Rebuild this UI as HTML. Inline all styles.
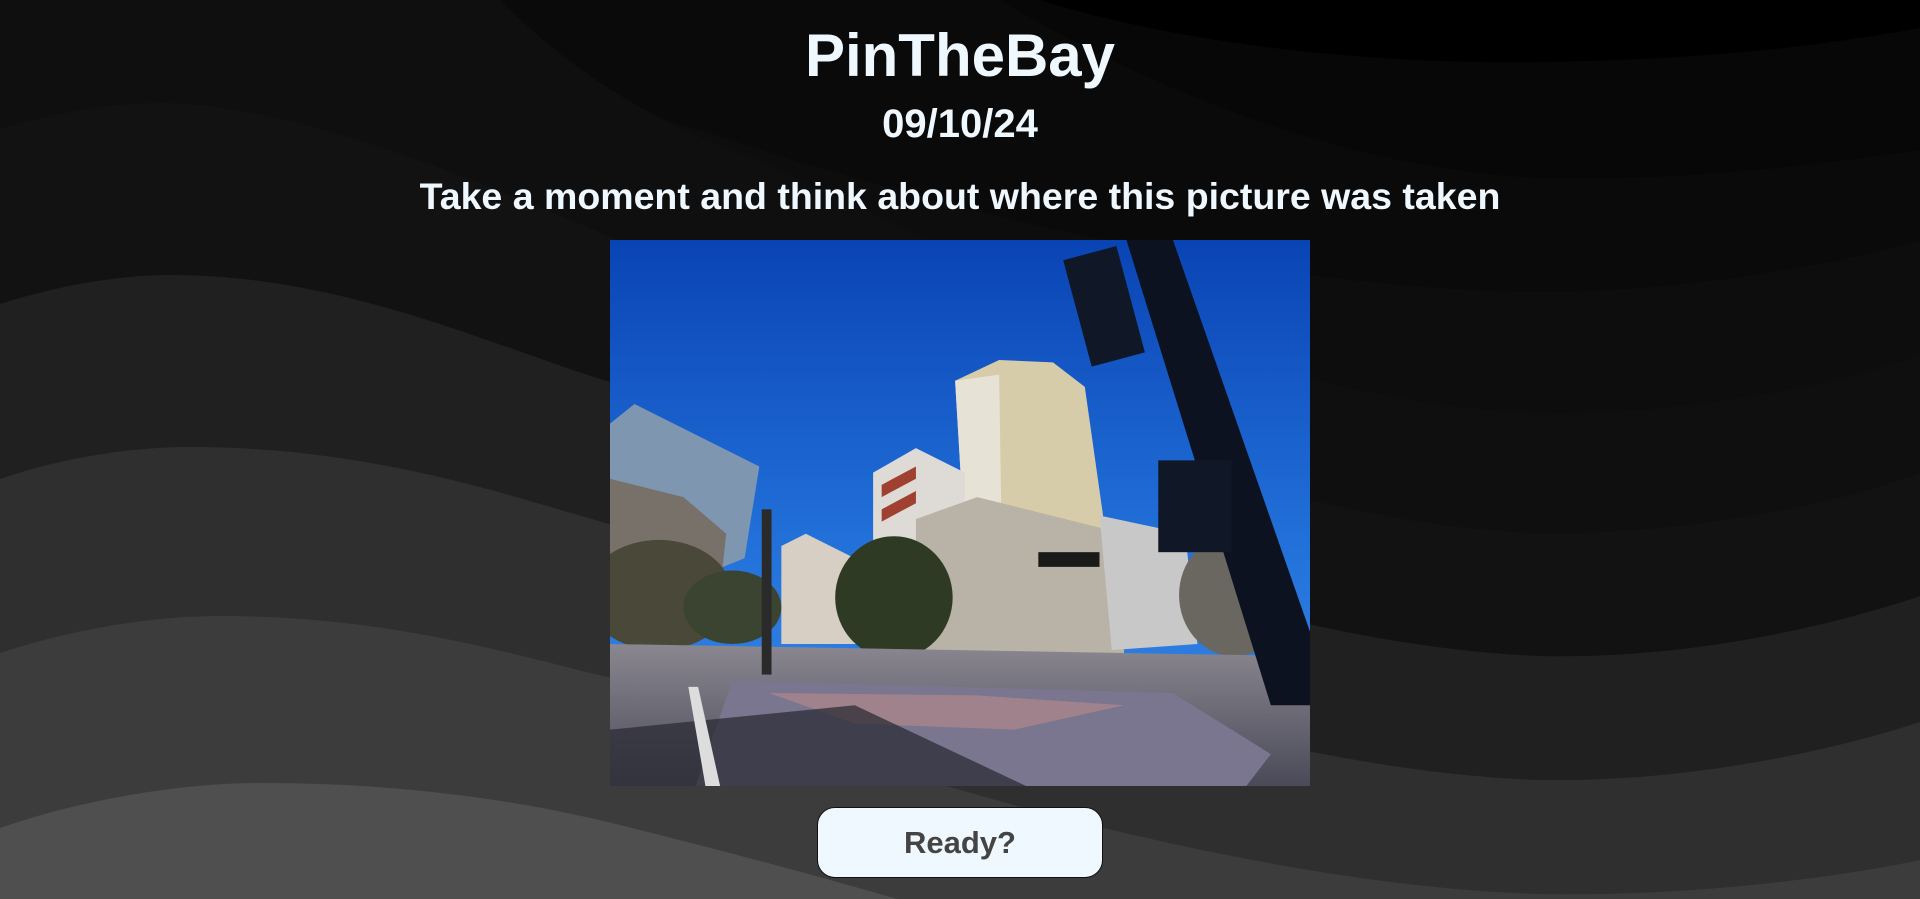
<!DOCTYPE html>
<html><head><meta charset="utf-8"><style>
html,body{margin:0;padding:0;width:1920px;height:899px;overflow:hidden;background:#000;font-family:"Liberation Sans",sans-serif;}
#bg{position:absolute;left:0;top:0}
.t{position:absolute;left:0;width:1920px;text-align:center;color:#f0f8ff;font-weight:bold;white-space:nowrap}
#photo{position:absolute;left:610px;top:240px;width:700px;height:546px}
#btn{position:absolute;left:817px;top:807px;width:286px;height:71px;background:#f0f8ff;border:1px solid #111;border-radius:18px;box-sizing:border-box;text-align:center;line-height:69px;font-weight:bold;font-size:31px;color:#444}
</style></head><body>
<svg id="bg" width="1920" height="899" viewBox="0 0 1920 899">
<rect width="1920" height="899" fill="#000"/>
<path fill="#070707" d="M0,0 L1040,0 C1200,50 1400,65 1550,62 C1750,58 1850,40 1920,28 L1920,899 L0,899Z"/>
<path fill="#0a0a0a" d="M0,0 L1000,0 C1150,90 1350,170 1540,178 C1700,182 1850,160 1920,150 L1920,899 L0,899Z"/>
<path fill="#0d0d0d" d="M0,0 L420,0 C500,50 580,100 700,130 C1000,230 1300,290 1540,292 C1700,292 1850,260 1920,241 L1920,899 L0,899Z"/>
<path fill="#0f0f0f" d="M0,0 L500,0 C560,60 640,120 760,160 C1050,300 1300,405 1540,413 C1700,415 1850,380 1920,355 L1920,899 L0,899Z"/>
<path fill="#121212" d="M0,129 C60,112 110,103 160,103 C300,103 500,190 620,241 C900,360 1250,525 1540,533 C1700,535 1850,500 1920,473 L1920,899 L0,899Z"/>
<path fill="#202020" d="M0,304 C60,285 120,275 170,275 C350,275 500,350 620,385 C900,500 1250,645 1540,656 C1700,660 1850,620 1920,596 L1920,899 L0,899Z"/>
<path fill="#2f2f2f" d="M0,479 C60,458 130,447 190,447 C380,447 520,500 620,527 C900,640 1250,770 1540,780 C1700,783 1850,745 1920,722 L1920,899 L0,899Z"/>
<path fill="#3c3c3c" d="M0,653 C70,630 150,616 220,616 C400,616 530,660 620,680 C900,780 1250,885 1540,894 C1700,897 1850,875 1920,860 L1920,899 L0,899Z"/>
<path fill="#4f4f4f" d="M0,828 C80,800 180,783 260,783 C420,783 540,805 620,825 C800,870 900,899 1000,930 L0,930Z"/>
</svg>
<div class="t" style="top:20px;font-size:60px;line-height:72px">PinTheBay</div>
<div class="t" style="top:102px;font-size:40px;line-height:44px">09/10/24</div>
<div class="t" style="top:174px;font-size:37.5px;line-height:44px">Take a moment and think about where this picture was taken</div>
<svg id="photo" viewBox="0 0 572 446" preserveAspectRatio="none">
<defs><linearGradient id="sky" x1="0" y1="0" x2="0" y2="1"><stop offset="0" stop-color="#0a44b4"/><stop offset="0.6" stop-color="#2474dc"/><stop offset="1" stop-color="#3a88e6"/></linearGradient>
<linearGradient id="gr" x1="0" y1="0" x2="0" y2="1"><stop offset="0" stop-color="#8a8790"/><stop offset="1" stop-color="#4a4a58"/></linearGradient></defs>
<rect width="572" height="446" fill="url(#sky)"/>
<polygon points="0,150 20,134 122,185 110,260 60,280 0,270" fill="#7f96b0"/>
<polygon points="0,195 60,210 95,240 90,285 0,290" fill="#77716a"/>
<polygon points="282,115 318,98 362,100 388,120 405,240 290,250" fill="#d6ccaa"/>
<polygon points="282,115 318,110 320,240 290,250" fill="#e6e2d6"/>
<polygon points="215,190 250,170 290,190 290,260 215,265" fill="#dedad6"/>
<polygon points="222,200 250,185 250,195 222,210" fill="#a04030"/>
<polygon points="222,220 250,205 250,215 222,230" fill="#a04030"/>
<polygon points="140,250 160,240 210,265 210,330 140,330" fill="#d8cfc4"/>
<polygon points="250,228 300,210 420,240 420,340 250,345" fill="#b9b2a6"/>
<polygon points="400,225 470,240 480,330 410,335" fill="#c8c8c8"/>
<ellipse cx="232" cy="292" rx="48" ry="50" fill="#2f3a24"/>
<ellipse cx="40" cy="290" rx="60" ry="45" fill="#4a4838"/>
<ellipse cx="100" cy="300" rx="40" ry="30" fill="#3a4430"/>
<ellipse cx="510" cy="290" rx="45" ry="50" fill="#6a6660"/>
<polygon points="0,330 572,340 572,446 0,446" fill="url(#gr)"/>
<polygon points="100,360 460,370 540,420 520,446 70,446" fill="#7a7690"/>
<polygon points="130,370 300,372 420,380 330,400 200,395" fill="#b88a8a" opacity="0.6"/>
<polygon points="0,400 200,380 340,446 0,446" fill="#2c2c36" opacity="0.75"/>
<polygon points="64,365 72,365 90,446 78,446" fill="#ddd"/>
<polygon points="422,0 460,0 572,320 572,380 540,380" fill="#0c1220"/>
<rect x="380" y="10" width="45" height="90" fill="#101828" transform="rotate(-15 400 50)"/>
<rect x="448" y="180" width="60" height="75" fill="#101828"/>
<rect x="350" y="255" width="50" height="12" fill="#1a1a1a"/>
<rect x="124" y="220" width="8" height="135" fill="#2a2a2a"/>
</svg>
<div id="btn">Ready?</div>
</body></html>
